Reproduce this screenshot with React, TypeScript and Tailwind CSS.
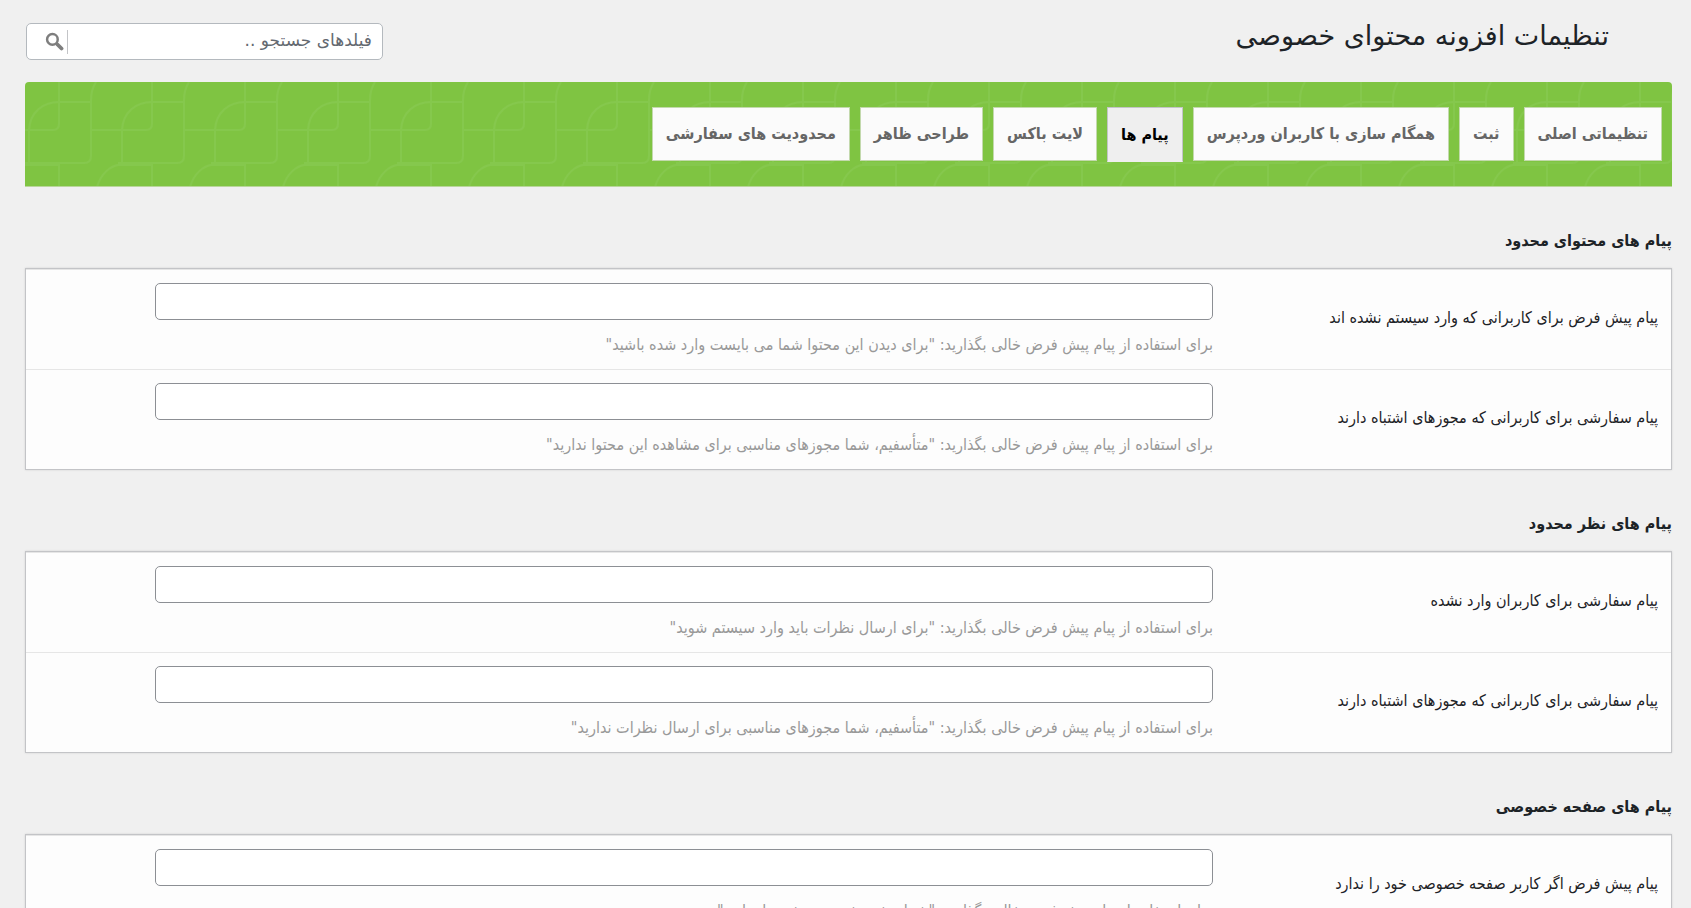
import React from 'react';

interface Field {
  id: string;
  label: string;
  hint: string;
}

interface Section {
  title: string;
  fields: Field[];
}

const tabs: string[] = [
  'تنظیماتی اصلی',
  'ثبت',
  'همگام سازی با کاربران وردپرس',
  'پیام ها',
  'لایت باکس',
  'طراحی ظاهر',
  'محدودیت های سفارشی',
];

const activeTab = 'پیام ها';

const sections: Section[] = [
  {
    title: 'پیام های محتوای محدود',
    fields: [
      {
        id: 'content-guest',
        label: 'پیام پیش فرض برای کاربرانی که وارد سیستم نشده اند',
        hint: 'برای استفاده از پیام پیش فرض خالی بگذارید: "برای دیدن این محتوا شما می بایست وارد شده باشید"',
      },
      {
        id: 'content-denied',
        label: 'پیام سفارشی برای کاربرانی که مجوزهای اشتباه دارند',
        hint: 'برای استفاده از پیام پیش فرض خالی بگذارید: "متأسفیم، شما مجوزهای مناسبی برای مشاهده این محتوا ندارید"',
      },
    ],
  },
  {
    title: 'پیام های نظر محدود',
    fields: [
      {
        id: 'comment-guest',
        label: 'پیام سفارشی برای کاربران وارد نشده',
        hint: 'برای استفاده از پیام پیش فرض خالی بگذارید: "برای ارسال نظرات باید وارد سیستم شوید"',
      },
      {
        id: 'comment-denied',
        label: 'پیام سفارشی برای کاربرانی که مجوزهای اشتباه دارند',
        hint: 'برای استفاده از پیام پیش فرض خالی بگذارید: "متأسفیم، شما مجوزهای مناسبی برای ارسال نظرات ندارید"',
      },
    ],
  },
  {
    title: 'پیام های صفحه خصوصی',
    fields: [
      {
        id: 'page-missing',
        label: 'پیام پیش فرض اگر کاربر صفحه خصوصی خود را ندارد',
        hint: 'برای استفاده از پیام پیش فرض خالی بگذارید: "شما صفحه خصوصی خود را ندارید"',
      },
    ],
  },
];

// faint rounded squares behind the tabs
const BannerPattern: React.FC = () => (
  <svg className="absolute inset-0 h-full w-full" aria-hidden="true">
    <defs>
      <pattern id="squares" width="93" height="105" patternUnits="userSpaceOnUse">
        <g fill="none" stroke="#8ccb58" strokeWidth="2" opacity="0.5">
          <path d="M34 0V42Q34 48 28 48H0" />
          <path d="M66 48H93" />
          <path d="M4 80V48C5 30 18 20 34 20H66" />
          <path d="M71 0Q66 8 66 18V74Q66 81 59 81H0" />
          <path d="M72 105C76 91 86 84 93 83" />
          <path d="M0 83H34V105" />
        </g>
      </pattern>
    </defs>
    <rect width="100%" height="100%" fill="url(#squares)" />
  </svg>
);

const App: React.FC = () => {
  return (
    <main
      dir="rtl"
      lang="fa"
      className="min-h-screen bg-[#f0f0f0] pr-[19px] pl-[25px] font-['DejaVu_Sans',sans-serif] text-[#1d2327]"
    >
      {/* Header */}
      <header className="flex h-[82px] items-start justify-between pr-[63px]">
        <h1 className="pt-4 text-[27px] leading-10">تنظیمات افزونه محتوای خصوصی</h1>
        <div className="mt-[23px] ml-px flex h-[37px] w-[357px] items-center rounded-[5px] border border-[#b4b9be] bg-white pr-[10px] pl-[18px]">
          <input
            type="search"
            aria-label="فیلدهای جستجو"
            placeholder="فیلدهای جستجو .."
            className="h-8 min-w-0 flex-1 bg-transparent pb-1 text-[17px] outline-none placeholder:text-[#646970]"
          />
          <button type="button" aria-label="جستجو" className="flex h-6 items-center border-r border-[#c3c4c7] pr-[3px]">
            <svg viewBox="0 0 20 20" className="size-[19px]" fill="none" stroke="#7e7e7e">
              <circle cx="7.8" cy="7.8" r="5.6" strokeWidth="2.6" />
              <path d="M11.8 11.8L13.5 13.5" strokeWidth="2.4" />
              <path d="M13.4 13.4L17.4 17.4" strokeWidth="4" strokeLinecap="round" />
            </svg>
          </button>
        </div>
      </header>

      {/* Tabs */}
      <nav className="relative h-[105px] overflow-hidden rounded-t border-b border-[#b9d69b] bg-[#7fc442]">
        <BannerPattern />
        <div className="relative flex gap-[10px] px-[10px] pt-[25px] font-['DejaVu_Sans_Condensed','DejaVu_Sans',sans-serif]">
          {tabs.map((tab) => (
            <a
              key={tab}
              href="#"
              className={`flex items-center border px-[13px] text-base font-bold ${
                tab === activeTab
                  ? 'h-[55px] border-[#c3c4c7] border-b-[#efefef] bg-[#efefef] text-black'
                  : 'h-[54px] border-[#c3d9ad] bg-[#fbfbfb] text-[#666]'
              }`}
            >
              {tab}
            </a>
          ))}
        </div>
      </nav>

      {/* Sections */}
      {sections.map((section) => (
        <section key={section.title} className="pt-[38px]">
          <h2 className="h-[43px] font-['DejaVu_Sans_Condensed','DejaVu_Sans',sans-serif] text-base leading-8 font-bold">
            {section.title}
          </h2>
          <div className="border border-[#c3c4c7] bg-[#fdfdfd] shadow-[0_0_2px_rgba(0,0,0,0.12)]">
            {section.fields.map((field) => (
              <div key={field.id} className="flex h-[100px] border-t border-[#e6e6e6] px-[13px]">
                <label
                  htmlFor={field.id}
                  className="w-[445px] shrink-0 pt-[34px] font-['DejaVu_Sans_Condensed','DejaVu_Sans',sans-serif] text-base leading-7"
                >
                  {field.label}
                </label>
                <div className="ml-[116px] flex-1 pt-[13px]">
                  <input
                    id={field.id}
                    type="text"
                    className="block h-[37px] w-full rounded-[5px] border border-[#8c8f94] bg-white px-2"
                  />
                  <p className="pt-[13px] font-['DejaVu_Sans_Condensed','DejaVu_Sans',sans-serif] text-base leading-6 text-[#999]">
                    {field.hint}
                  </p>
                </div>
              </div>
            ))}
          </div>
        </section>
      ))}
    </main>
  );
};

export default App;
